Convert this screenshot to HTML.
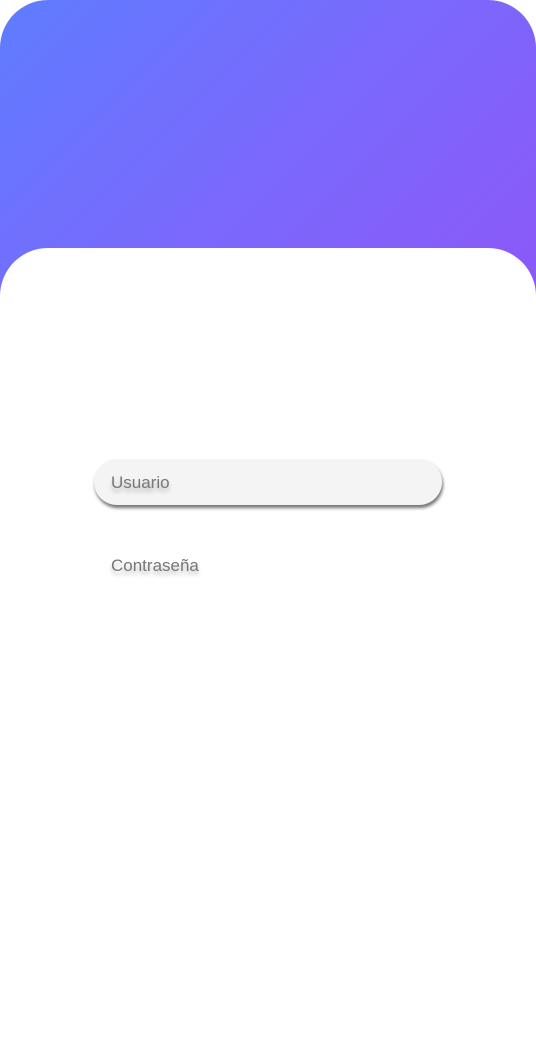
<!DOCTYPE html>
<html><head><style>
html,body{margin:0;padding:0;width:536px;height:1050px;background:#fff;overflow:hidden;font-family:"Liberation Sans",sans-serif}
.top{position:absolute;left:0;top:0;width:536px;height:300px;border-radius:48px 48px 0 0;background:linear-gradient(135deg,#5f7cff 0%,#7a69fc 50%,#8c58f7 100%)}
.card{position:absolute;left:0;top:248px;width:536px;height:802px;background:#fff;border-radius:48px 48px 0 0}
.inp{position:absolute;left:94px;top:459px;width:348px;height:46px;border-radius:23px;background:#f4f4f4;box-shadow:1px 3px 3px rgba(0,0,0,.55)}
.t{position:absolute;left:111px;font-size:17px;color:#777;text-shadow:0 4px 4px rgba(0,0,0,.25)}
</style></head><body>
<div class="top"></div>
<div class="card"></div>
<div class="inp"></div>
<div class="t" style="top:473px">Usuario</div>
<div class="t" style="top:556px">Contraseña</div>
</body></html>
